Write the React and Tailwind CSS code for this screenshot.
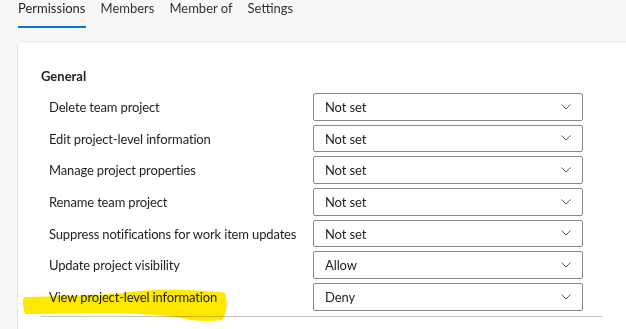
const tabs = ["Permissions", "Members", "Member of", "Settings"];

const permissions = [
  { label: "Delete team project", value: "Not set" },
  { label: "Edit project-level information", value: "Not set" },
  { label: "Manage project properties", value: "Not set" },
  { label: "Rename team project", value: "Not set" },
  { label: "Suppress notifications for work item updates", value: "Not set" },
  { label: "Update project visibility", value: "Allow" },
  { label: "View project-level information", value: "Deny" },
];

const font = { fontFamily: "Lato, 'Open Sans', sans-serif" };

const Dropdown = ({ value }) => (
  <div className="flex items-center justify-between w-[270px] h-[27.67px] border border-[#8a8886] rounded-[2px] bg-white pl-[11px] pr-[11px]">
    <span className="pt-[2px] text-[13px] tracking-[-0.1px] text-[#201f1e]">{value}</span>
    <svg width="10" height="6" viewBox="0 0 10 6" className="text-[#605e5c]">
      <path d="M0.5 0.5 L5 5 L9.5 0.5" fill="none" stroke="currentColor" strokeWidth="1" />
    </svg>
  </div>
);

const App = () => {
  return (
    <div
      className="w-[626px] h-[329px] overflow-hidden bg-[#f8f8f8] relative"
      style={font}
    >
      {/* Tabs */}
      <div className="flex gap-[15px] pl-[18px] h-[28px]">
        {tabs.map((tab, i) => (
          <div
            key={tab}
            className={
              i === 0
                ? "h-[28px] border-b-2 border-[#0078d4] text-[13px] leading-[16px] text-[#201f1e]"
                : "h-[28px] text-[13px] leading-[16px] text-[#323130]"
            }
          >
            {tab}
          </div>
        ))}
      </div>

      {/* Card */}
      <div className="relative ml-[18px] mt-[14px] w-[640px] h-[300px] bg-white rounded-tl-[4px] shadow-[0_0_0_1px_rgba(0,0,0,0.05),0_1px_3px_rgba(0,0,0,0.06)] pt-[24px] pl-[23px]">
        <h3 className="text-[13px] leading-[20px] font-bold text-[#201f1e]">
          General
        </h3>

        <div className="flex flex-col gap-[4px] mt-[7px]">
          {permissions.map((p) => (
            <div key={p.label} className="flex items-center">
              <div className="w-[272px] pl-[8px] pt-[2px] text-[13px] tracking-[-0.15px] text-[#201f1e]">
                {p.label}
              </div>
              <Dropdown value={p.value} />
            </div>
          ))}
        </div>

        <div className="mt-[5px] w-[561px] border-t border-[#c8c6c4]" />

        {/* Marker highlight */}
        <svg
          className="absolute left-[4px] top-[246px] mix-blend-multiply pointer-events-none"
          width="206"
          height="36"
          viewBox="0 0 206 36"
        >
          <path
            d="M2 9 C30 8 70 8 100 5 C120 2 140 1 160 2 C180 3 195 3 203 5 C206 12 205 26 200 32 C185 34 170 33 160 30 C140 27 110 25 80 25 C50 25 25 26 3 26 C1 20 0 13 2 9 Z"
            fill="#ffe800"
          />
        </svg>
      </div>
    </div>
  );
};

export default App;
